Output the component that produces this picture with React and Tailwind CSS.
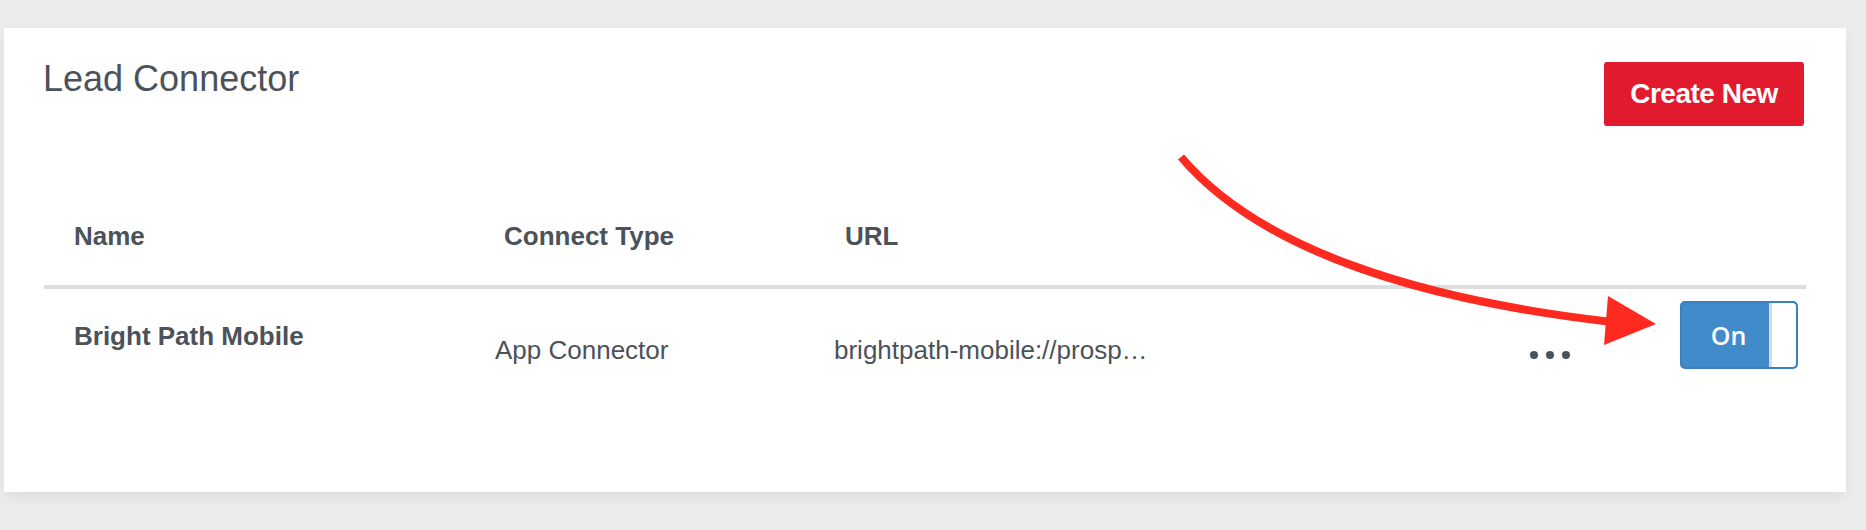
import React from "react";

const font = { fontFamily: '"Liberation Sans", Arial, sans-serif' };

export default function App() {
  return (
    <div className="relative w-[1866px] h-[530px] bg-[#ebecee] overflow-hidden" style={font}>
      <div className="pt-[28px] pl-[4px]">
        <div className="w-[1842px] h-[464px] bg-white shadow-[0_6px_14px_rgba(0,0,0,0.06)] text-[#4b525a]">
          <div className="flex justify-between items-start pl-[39px] pr-[42px]">
            <h1 className="mt-[33px] text-[36px] leading-none font-normal">Lead Connector</h1>
            <button className="mt-[34px] w-[200px] h-[64px] bg-[#e21a2d] text-white text-[28px] font-bold rounded-[3px] tracking-[-0.5px]">
              Create New
            </button>
          </div>
          <div className="ml-[40px] mr-[40px]">
            <div className="flex pt-[97px] pb-[36px] text-[26px] leading-none font-bold border-b-4 border-[#dddddd]">
              <div className="w-[420px] pl-[30px]">Name</div>
              <div className="w-[340px] pl-[40px]">Connect Type</div>
              <div className="pl-[41px]">URL</div>
            </div>
            <div className="flex items-start text-[26px] leading-none">
              <div className="w-[420px] pl-[30px] pt-[34px] font-bold">Bright Path Mobile</div>
              <div className="w-[340px] pl-[31px] pt-[48px]">App Connector</div>
              <div className="flex-1 pl-[30px] pt-[48px] whitespace-nowrap">brightpath-mobile://prosp…</div>
              <div className="flex gap-[8px] pt-[62px] mr-[110px]">
                <span className="w-[8px] h-[8px] rounded-full bg-[#4b525a]" />
                <span className="w-[8px] h-[8px] rounded-full bg-[#4b525a]" />
                <span className="w-[8px] h-[8px] rounded-full bg-[#4b525a]" />
              </div>
              <div className="mt-[12px] mr-[8px] w-[118px] h-[68px] flex rounded-[5px] border-2 border-[#3a7fc0] bg-[#428bca] overflow-hidden">
                <div
                  className="flex-1 flex items-center justify-center text-white text-[25px] font-semibold pl-[6px]"
                  style={{ fontFamily: '"Open Sans", sans-serif' }}
                >
                  On
                </div>
                <div className="w-[27px] h-full bg-white border-l-[3px] border-[#dcdcdc] rounded-r-[3px]" />
              </div>
            </div>
          </div>
        </div>
      </div>
      <svg className="absolute top-0 left-0 pointer-events-none" width="1866" height="530" viewBox="0 0 1866 530">
        <path d="M1181 157 C1260 250, 1420 300, 1612 322" fill="none" stroke="#ff2a1f" strokeWidth="8" />
        <polygon points="1608,296 1604,345 1656,324" fill="#ff2a1f" />
      </svg>
    </div>
  );
}
